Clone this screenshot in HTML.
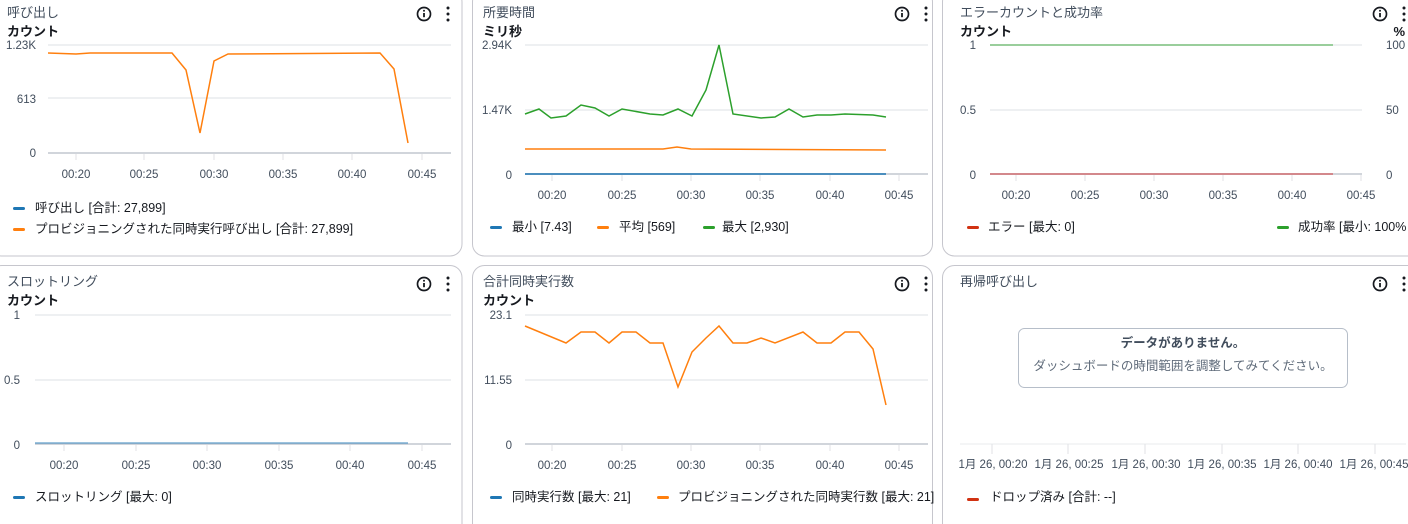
<!DOCTYPE html>
<html><head><meta charset="utf-8"><style>
html,body{margin:0;padding:0;background:#fff;width:1408px;height:524px;overflow:hidden}
svg{display:block;font-family:"Liberation Sans","Noto Sans CJK JP",sans-serif}
.t{font-size:13px;fill:#414d5c}
.u{font-size:13px;font-weight:bold;fill:#16191f}
.a{font-size:11.5px;fill:#414d5c}
.l{font-size:12.5px;fill:#16191f}
.g{stroke:#e9ebed;stroke-width:1.5}
.ax{stroke:#d1d5db;stroke-width:2}
.tk{stroke:#e0e2e5;stroke-width:1}
.p{fill:#fff;stroke:#c6c6cd;stroke-width:1}
</style></head><body>
<svg width="1408" height="524" viewBox="0 0 1408 524">
<defs>
<g id="ic"><circle cx="0" cy="0" r="6.5" fill="none" stroke="#16191f" stroke-width="1.7"/><rect x="-0.9" y="-1" width="1.8" height="4.2" fill="#16191f"/><circle cx="0" cy="-3.2" r="1" fill="#16191f"/><circle cx="24" cy="-6" r="1.5" fill="#16191f"/><circle cx="24" cy="0" r="1.5" fill="#16191f"/><circle cx="24" cy="6" r="1.5" fill="#16191f"/></g>
</defs>
<rect class="p" x="-10" y="-10" width="472" height="266" rx="12"/>
<rect class="p" x="472.5" y="-10" width="460" height="266" rx="12"/>
<rect class="p" x="942.5" y="-10" width="480" height="266" rx="12"/>
<rect class="p" x="-10" y="265.5" width="472" height="270" rx="12"/>
<rect class="p" x="472.5" y="265.5" width="460" height="270" rx="12"/>
<rect class="p" x="942.5" y="265.5" width="480" height="270" rx="12"/>

<!-- Panel 1 -->
<text class="t" x="7" y="17">呼び出し</text>
<text class="u" x="7" y="36">カウント</text>
<use href="#ic" x="424" y="14"/>
<line class="g" x1="48" y1="45" x2="451" y2="45"/><line class="g" x1="48" y1="98" x2="451" y2="98"/>
<line class="ax" x1="48" y1="153" x2="451" y2="153"/>
<g class="tk"><line x1="76" y1="154" x2="76" y2="160"/><line x1="144" y1="154" x2="144" y2="160"/><line x1="214" y1="154" x2="214" y2="160"/><line x1="283" y1="154" x2="283" y2="160"/><line x1="352" y1="154" x2="352" y2="160"/><line x1="422" y1="154" x2="422" y2="160"/></g>
<g class="a" text-anchor="end"><text x="36" y="49">1.23K</text><text x="36" y="103">613</text><text x="36" y="157">0</text></g>
<g class="a" text-anchor="middle"><text x="76" y="178">00:20</text><text x="144" y="178">00:25</text><text x="214" y="178">00:30</text><text x="283" y="178">00:35</text><text x="352" y="178">00:40</text><text x="422" y="178">00:45</text></g>
<polyline fill="none" stroke="#ff7f0e" stroke-width="1.5" points="48,53 76,54 90,53 172,53 186,70 200,133 214,61 228,54 380,53 394,69 408,143"/>
<rect x="13" y="207" width="12" height="3" rx="1.5" fill="#1f77b4"/><text class="l" x="35" y="212">呼び出し [合計: 27,899]</text>
<rect x="13" y="228" width="12" height="3" rx="1.5" fill="#ff7f0e"/><text class="l" x="35" y="233">プロビジョニングされた同時実行呼び出し [合計: 27,899]</text>

<!-- Panel 2 -->
<text class="t" x="483" y="17">所要時間</text>
<text class="u" x="483" y="36">ミリ秒</text>
<use href="#ic" x="902" y="14"/>
<line class="g" x1="525" y1="45" x2="928" y2="45"/><line class="g" x1="525" y1="110" x2="928" y2="110"/>
<line class="ax" x1="525" y1="174" x2="928" y2="174"/>
<g class="tk"><line x1="552" y1="175" x2="552" y2="181"/><line x1="622" y1="175" x2="622" y2="181"/><line x1="691" y1="175" x2="691" y2="181"/><line x1="760" y1="175" x2="760" y2="181"/><line x1="830" y1="175" x2="830" y2="181"/><line x1="899" y1="175" x2="899" y2="181"/></g>
<g class="a" text-anchor="end"><text x="512" y="49">2.94K</text><text x="512" y="114">1.47K</text><text x="512" y="179">0</text></g>
<g class="a" text-anchor="middle"><text x="552" y="199">00:20</text><text x="622" y="199">00:25</text><text x="691" y="199">00:30</text><text x="760" y="199">00:35</text><text x="830" y="199">00:40</text><text x="899" y="199">00:45</text></g>
<line x1="525" y1="174" x2="886" y2="174" stroke="#1f77b4" stroke-width="1.5"/>
<polyline fill="none" stroke="#ff7f0e" stroke-width="1.5" points="525,149 663,149 677,147 691,149 886,150"/>
<polyline fill="none" stroke="#2ca02c" stroke-width="1.5" points="525,114 539,109 551,118 566,116 581,105 595,108 609,116 622,109 650,114 663,115 678,109 692,116 706,90 719,45 733,114 761,118 775,117 789,109 803,117 817,115 831,115 845,114 873,115 886,117"/>
<rect x="490" y="226" width="12" height="3" rx="1.5" fill="#1f77b4"/><text class="l" x="512" y="231">最小 [7.43]</text>
<rect x="597" y="226" width="12" height="3" rx="1.5" fill="#ff7f0e"/><text class="l" x="619" y="231">平均 [569]</text>
<rect x="703" y="226" width="12" height="3" rx="1.5" fill="#2ca02c"/><text class="l" x="722" y="231">最大 [2,930]</text>

<!-- Panel 3 -->
<text class="t" x="960" y="17">エラーカウントと成功率</text>
<text class="u" x="960" y="36">カウント</text>
<text class="u" x="1405" y="36" text-anchor="end">%</text>
<use href="#ic" x="1380" y="14"/>
<line class="g" x1="990" y1="45" x2="1362" y2="45"/><line class="g" x1="990" y1="110" x2="1362" y2="110"/>
<line class="ax" x1="990" y1="174" x2="1362" y2="174"/>
<g class="tk"><line x1="1016" y1="175" x2="1016" y2="181"/><line x1="1085" y1="175" x2="1085" y2="181"/><line x1="1154" y1="175" x2="1154" y2="181"/><line x1="1223" y1="175" x2="1223" y2="181"/><line x1="1292" y1="175" x2="1292" y2="181"/><line x1="1361" y1="175" x2="1361" y2="181"/></g>
<g class="a" text-anchor="end"><text x="976" y="49">1</text><text x="976" y="114">0.5</text><text x="976" y="179">0</text></g>
<g class="a"><text x="1386" y="49">100</text><text x="1386" y="114">50</text><text x="1386" y="179">0</text></g>
<g class="a" text-anchor="middle"><text x="1016" y="199">00:20</text><text x="1085" y="199">00:25</text><text x="1154" y="199">00:30</text><text x="1223" y="199">00:35</text><text x="1292" y="199">00:40</text><text x="1361" y="199">00:45</text></g>
<line x1="990" y1="45" x2="1333" y2="45" stroke="#2ca02c" stroke-width="1.2" opacity=".7"/>
<line x1="990" y1="174" x2="1333" y2="174" stroke="#d62728" stroke-width="1.2" opacity=".7"/>
<rect x="967" y="226" width="12" height="3" rx="1.5" fill="#d13212"/><text class="l" x="988" y="231">エラー [最大: 0]</text>
<rect x="1277" y="226" width="12" height="3" rx="1.5" fill="#2ca02c"/><text class="l" x="1298" y="231">成功率 [最小: 100%</text>

<!-- Panel 4 -->
<text class="t" x="7" y="286">スロットリング</text>
<text class="u" x="7" y="305">カウント</text>
<use href="#ic" x="424" y="284"/>
<line class="g" x1="35" y1="315" x2="451" y2="315"/><line class="g" x1="35" y1="380" x2="451" y2="380"/>
<line class="ax" x1="35" y1="444" x2="451" y2="444"/>
<g class="tk"><line x1="64" y1="445" x2="64" y2="451"/><line x1="136" y1="445" x2="136" y2="451"/><line x1="207" y1="445" x2="207" y2="451"/><line x1="279" y1="445" x2="279" y2="451"/><line x1="350" y1="445" x2="350" y2="451"/><line x1="422" y1="445" x2="422" y2="451"/></g>
<g class="a" text-anchor="end"><text x="20" y="319">1</text><text x="20" y="384">0.5</text><text x="20" y="449">0</text></g>
<g class="a" text-anchor="middle"><text x="64" y="469">00:20</text><text x="136" y="469">00:25</text><text x="207" y="469">00:30</text><text x="279" y="469">00:35</text><text x="350" y="469">00:40</text><text x="422" y="469">00:45</text></g>
<line x1="35" y1="443" x2="408" y2="443" stroke="#1f77b4" stroke-width="1.2" opacity=".7"/>
<rect x="13" y="496" width="12" height="3" rx="1.5" fill="#1f77b4"/><text class="l" x="35" y="501">スロットリング [最大: 0]</text>

<!-- Panel 5 -->
<text class="t" x="483" y="286">合計同時実行数</text>
<text class="u" x="483" y="305">カウント</text>
<use href="#ic" x="902" y="284"/>
<line class="g" x1="525" y1="315" x2="928" y2="315"/><line class="g" x1="525" y1="380" x2="928" y2="380"/>
<line class="ax" x1="525" y1="444" x2="928" y2="444"/>
<g class="tk"><line x1="552" y1="445" x2="552" y2="451"/><line x1="622" y1="445" x2="622" y2="451"/><line x1="691" y1="445" x2="691" y2="451"/><line x1="760" y1="445" x2="760" y2="451"/><line x1="830" y1="445" x2="830" y2="451"/><line x1="899" y1="445" x2="899" y2="451"/></g>
<g class="a" text-anchor="end"><text x="512" y="319">23.1</text><text x="512" y="384">11.55</text><text x="512" y="449">0</text></g>
<g class="a" text-anchor="middle"><text x="552" y="469">00:20</text><text x="622" y="469">00:25</text><text x="691" y="469">00:30</text><text x="760" y="469">00:35</text><text x="830" y="469">00:40</text><text x="899" y="469">00:45</text></g>
<polyline fill="none" stroke="#ff7f0e" stroke-width="1.5" points="525,326 566,343 581,332 595,332 609,343 622,332 636,332 650,343 663,343 678,387 692,352 706,338 719,326 733,343 747,343 761,338 775,343 803,332 817,343 831,343 845,332 859,332 873,349 886,405"/>
<rect x="490" y="496" width="12" height="3" rx="1.5" fill="#1f77b4"/><text class="l" x="512" y="501">同時実行数 [最大: 21]</text>
<rect x="657" y="496" width="12" height="3" rx="1.5" fill="#ff7f0e"/>
<svg x="0" y="0" width="936" height="524"><text class="l" x="678" y="501">プロビジョニングされた同時実行数 [最大: 21]</text></svg>

<!-- Panel 6 -->
<text class="t" x="960" y="286">再帰呼び出し</text>
<use href="#ic" x="1380" y="284"/>
<rect x="1018.5" y="328.5" width="329" height="59" rx="6" fill="#fff" stroke="#b6bec9"/>
<text x="1183" y="347" text-anchor="middle" style="font-size:12.5px;font-weight:bold;fill:#414d5c">データがありません。</text>
<text x="1183" y="370" text-anchor="middle" style="font-size:12.5px;fill:#5f6b7a">ダッシュボードの時間範囲を調整してみてください。</text>
<line x1="960" y1="444" x2="1406" y2="444" stroke="#e9ebed" stroke-width="1"/>
<g class="tk"><line x1="992" y1="444" x2="992" y2="454"/><line x1="1068" y1="444" x2="1068" y2="454"/><line x1="1145" y1="444" x2="1145" y2="454"/><line x1="1222" y1="444" x2="1222" y2="454"/><line x1="1298" y1="444" x2="1298" y2="454"/><line x1="1375" y1="444" x2="1375" y2="454"/></g>
<g class="a" text-anchor="middle"><text x="993" y="468">1月 26, 00:20</text><text x="1069" y="468">1月 26, 00:25</text><text x="1146" y="468">1月 26, 00:30</text><text x="1222" y="468">1月 26, 00:35</text><text x="1298" y="468">1月 26, 00:40</text><text x="1374" y="468">1月 26, 00:45</text></g>
<rect x="967" y="498" width="12" height="3" rx="1.5" fill="#d13212"/><text class="l" x="990" y="501">ドロップ済み [合計: --]</text>
</svg>
</body></html>
